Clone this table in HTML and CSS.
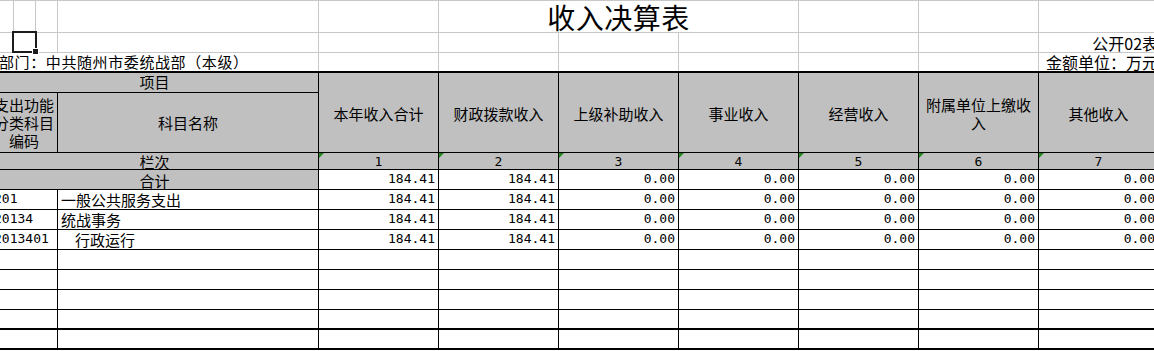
FILE: index.html
```html
<!DOCTYPE html>
<html lang="zh-CN">
<head>
<meta charset="utf-8">
<title>收入决算表</title>
<link rel="stylesheet" href="styles.css">
</head>
<body>
<div class="sheet">
<table class="grid">
<colgroup>
<col class="c-a"><col class="c-b"><col class="c-c"><col class="c-d">
<col class="c-n"><col class="c-n"><col class="c-n"><col class="c-n"><col class="c-n"><col class="c-n"><col class="c-n">
</colgroup>
<tbody>
<tr class="r-title">
<td class="g"></td><td class="g"></td><td class="g"></td><td class="g"></td><td class="g"></td>
<td class="g title" colspan="3">收入决算表</td>
<td class="g"></td><td class="g"></td><td class="g"></td>
</tr>
<tr class="r-note">
<td class="g"></td><td class="g sel"><span class="sel-box"></span><span class="sel-handle"></span></td><td class="g"></td><td class="g"></td><td class="g"></td><td class="g"></td><td class="g"></td><td class="g"></td><td class="g"></td><td class="g"></td>
<td class="g note">公开02表</td>
</tr>
<tr class="r-dept">
<td class="g dept" colspan="4">部门：中共随州市委统战部（本级）</td>
<td class="g"></td><td class="g"></td><td class="g"></td><td class="g"></td><td class="g"></td><td class="g"></td>
<td class="g note">金额单位：万元</td>
</tr>
<tr class="r-head1 thick-top">
<td class="h" colspan="4">项目</td>
<td class="h hd" rowspan="2">本年收入合计</td>
<td class="h hd" rowspan="2">财政拨款收入</td>
<td class="h hd" rowspan="2">上级补助收入</td>
<td class="h hd" rowspan="2">事业收入</td>
<td class="h hd" rowspan="2">经营收入</td>
<td class="h hd" rowspan="2">附属单位上缴收入</td>
<td class="h hd" rowspan="2">其他收入</td>
</tr>
<tr class="r-head2">
<td class="h code-h" colspan="3">支出功能分类科目编码</td>
<td class="h">科目名称</td>
</tr>
<tr class="r-idx">
<td class="h idx-label" colspan="4">栏次</td>
<td class="h idx"><i class="flag"></i>1</td>
<td class="h idx"><i class="flag"></i>2</td>
<td class="h idx"><i class="flag"></i>3</td>
<td class="h idx"><i class="flag"></i>4</td>
<td class="h idx"><i class="flag"></i>5</td>
<td class="h idx"><i class="flag"></i>6</td>
<td class="h idx"><i class="flag"></i>7</td>
</tr>
<tr class="r-row">
<td class="h total" colspan="4">合计</td>
<td class="num">184.41</td><td class="num">184.41</td><td class="num">0.00</td><td class="num">0.00</td><td class="num">0.00</td><td class="num">0.00</td><td class="num">0.00</td>
</tr>
<tr class="r-row">
<td class="code" colspan="3">201</td><td class="name">一般公共服务支出</td>
<td class="num">184.41</td><td class="num">184.41</td><td class="num">0.00</td><td class="num">0.00</td><td class="num">0.00</td><td class="num">0.00</td><td class="num">0.00</td>
</tr>
<tr class="r-row">
<td class="code" colspan="3">20134</td><td class="name">统战事务</td>
<td class="num">184.41</td><td class="num">184.41</td><td class="num">0.00</td><td class="num">0.00</td><td class="num">0.00</td><td class="num">0.00</td><td class="num">0.00</td>
</tr>
<tr class="r-row">
<td class="code" colspan="3">2013401</td><td class="name indent">行政运行</td>
<td class="num">184.41</td><td class="num">184.41</td><td class="num">0.00</td><td class="num">0.00</td><td class="num">0.00</td><td class="num">0.00</td><td class="num">0.00</td>
</tr>
<tr class="r-row">
<td class="cell" colspan="3"></td><td class="cell"></td><td class="cell"></td><td class="cell"></td><td class="cell"></td><td class="cell"></td><td class="cell"></td><td class="cell"></td><td class="cell"></td>
</tr>
<tr class="r-row">
<td class="cell" colspan="3"></td><td class="cell"></td><td class="cell"></td><td class="cell"></td><td class="cell"></td><td class="cell"></td><td class="cell"></td><td class="cell"></td><td class="cell"></td>
</tr>
<tr class="r-row">
<td class="cell" colspan="3"></td><td class="cell"></td><td class="cell"></td><td class="cell"></td><td class="cell"></td><td class="cell"></td><td class="cell"></td><td class="cell"></td><td class="cell"></td>
</tr>
<tr class="r-short">
<td class="cell" colspan="3"></td><td class="cell"></td><td class="cell"></td><td class="cell"></td><td class="cell"></td><td class="cell"></td><td class="cell"></td><td class="cell"></td><td class="cell"></td>
</tr>
<tr class="r-row r-last">
<td class="cell" colspan="3"></td><td class="cell"></td><td class="cell"></td><td class="cell"></td><td class="cell"></td><td class="cell"></td><td class="cell"></td><td class="cell"></td><td class="cell"></td>
</tr>
</tbody>
</table>
</div>
</body>
</html>
```

FILE: styles.css
```css
html, body {
  margin: 0;
  padding: 0;
  background: #ffffff;
}

body {
  font-family: "Noto Sans CJK SC", "Noto Sans", sans-serif;
  font-size: 15px;
  color: #000000;
}

.sheet {
  width: 1154px;
  height: 351px;
  overflow: hidden;
}

.grid {
  border-collapse: collapse;
  table-layout: fixed;
  width: 1168px;
  margin-left: -10px;
}

.c-a { width: 23px; }
.c-b { width: 22px; }
.c-c { width: 22px; }
.c-d { width: 261px; }
.c-n { width: 120px; }

td {
  padding: 0 3px;
  white-space: nowrap;
  line-height: 16px;
  vertical-align: bottom;
  overflow: visible;
}

/* light sheet gridlines above the table */
.g {
  border: 1px solid #c8c8c8;
}

.r-title { height: 32px; }
.r-note { height: 20px; }
.r-dept { height: 19px; }
.r-head1 { height: 21px; }
.r-head2 { height: 60px; }
.r-idx { height: 17px; }
.r-row { height: 20px; }
.r-short { height: 19px; }

.title {
  font-size: 28px;
  line-height: 30px;
  text-align: center;
  vertical-align: middle;
  letter-spacing: 0.5px;
}

.note {
  text-align: right;
  font-size: 16px;
  padding: 0 0 1px 0;
}

.dept {
  padding: 0 0 1px 8px;
  font-size: 15px;
  letter-spacing: 0.6px;
}

.sel {
  position: relative;
}

.sel-box {
  position: absolute;
  z-index: 2;
  left: -2px;
  top: -2px;
  width: 21px;
  height: 18px;
  border: 2px solid #1c1c1c;
}

.sel-handle {
  position: absolute;
  z-index: 3;
  left: 18px;
  top: 15px;
  width: 7px;
  height: 7px;
  background: #1c1c1c;
  border: 1px solid #ffffff;
  box-sizing: border-box;
}

/* table cells */
.h,
.code,
.name,
.num,
.cell {
  border: 1px solid #000000;
}

.h {
  background: #c0c0c0;
  text-align: center;
  vertical-align: middle;
}

.thick-top > td {
  border-top: 2px solid #000000;
}

.r-last > td {
  border-top: 2px solid #000000;
  border-bottom: 2px solid #000000;
}

.hd {
  white-space: normal;
  line-height: 18px;
  padding: 3px 4px 0;
}

.code-h {
  white-space: normal;
  line-height: 18px;
  padding: 0 2px;
}

.idx-label {
  line-height: 15px;
  vertical-align: bottom;
}

.idx {
  position: relative;
  font-family: "DejaVu Sans Mono", monospace;
  font-size: 13px;
  line-height: 14px;
  vertical-align: bottom;
}

.flag {
  position: absolute;
  left: 0;
  top: 0;
  width: 0;
  height: 0;
  border-top: 5px solid #1e8a1e;
  border-right: 5px solid transparent;
}

.total {
  vertical-align: bottom;
}

.code {
  font-family: "DejaVu Sans Mono", monospace;
  font-size: 13px;
  padding: 0 0 2px 3px;
  text-align: left;
}

.name {
  text-align: left;
  padding: 0 0 1px 3px;
}

.name.indent {
  padding-left: 17px;
}

.num {
  font-family: "DejaVu Sans Mono", monospace;
  font-size: 13px;
  text-align: right;
  padding: 0 3px 2px 0;
}
```
